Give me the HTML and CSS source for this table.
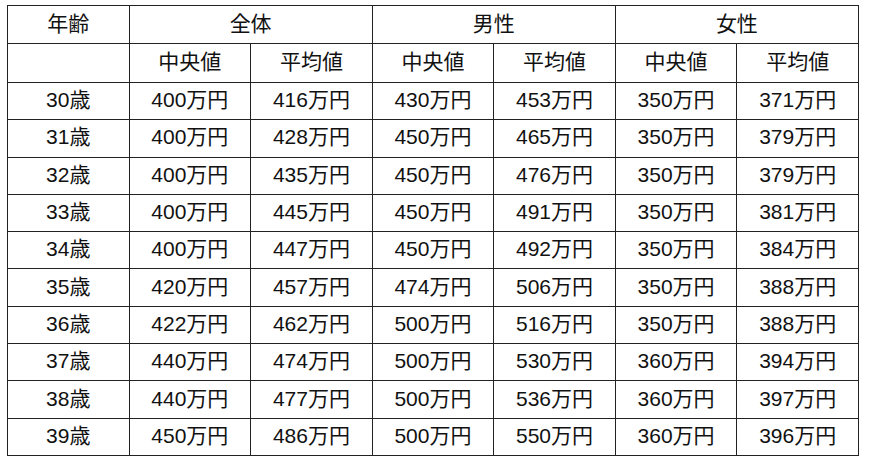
FILE: index.html
```html
<!DOCTYPE html>
<html lang="ja">
<head>
<meta charset="utf-8">
<link rel="stylesheet" href="styles.css">
</head>
<body>
<table class="salary">
  <colgroup>
    <col class="c"><col class="c"><col class="c"><col class="c"><col class="c"><col class="c"><col class="c">
  </colgroup>
  <thead>
    <tr class="h1">
      <th>年齢</th><th colspan="2">全体</th><th colspan="2">男性</th><th colspan="2">女性</th>
    </tr>
    <tr class="h2">
      <th></th><th>中央値</th><th>平均値</th><th>中央値</th><th>平均値</th><th>中央値</th><th>平均値</th>
    </tr>
  </thead>
  <tbody>
    <tr><td>30歳</td><td>400万円</td><td>416万円</td><td>430万円</td><td>453万円</td><td>350万円</td><td>371万円</td></tr>
    <tr><td>31歳</td><td>400万円</td><td>428万円</td><td>450万円</td><td>465万円</td><td>350万円</td><td>379万円</td></tr>
    <tr><td>32歳</td><td>400万円</td><td>435万円</td><td>450万円</td><td>476万円</td><td>350万円</td><td>379万円</td></tr>
    <tr><td>33歳</td><td>400万円</td><td>445万円</td><td>450万円</td><td>491万円</td><td>350万円</td><td>381万円</td></tr>
    <tr><td>34歳</td><td>400万円</td><td>447万円</td><td>450万円</td><td>492万円</td><td>350万円</td><td>384万円</td></tr>
    <tr><td>35歳</td><td>420万円</td><td>457万円</td><td>474万円</td><td>506万円</td><td>350万円</td><td>388万円</td></tr>
    <tr><td>36歳</td><td>422万円</td><td>462万円</td><td>500万円</td><td>516万円</td><td>350万円</td><td>388万円</td></tr>
    <tr><td>37歳</td><td>440万円</td><td>474万円</td><td>500万円</td><td>530万円</td><td>360万円</td><td>394万円</td></tr>
    <tr><td>38歳</td><td>440万円</td><td>477万円</td><td>500万円</td><td>536万円</td><td>360万円</td><td>397万円</td></tr>
    <tr><td>39歳</td><td>450万円</td><td>486万円</td><td>500万円</td><td>550万円</td><td>360万円</td><td>396万円</td></tr>
  </tbody>
</table>
</body>
</html>
```
FILE: styles.css
```css
html, body {
  margin: 0;
  padding: 0;
  background: #ffffff;
}
body {
  padding: 5px 0 0 7px;
  font-family: "Liberation Sans", "Noto Sans CJK JP", sans-serif;
  color: #111111;
}
.salary {
  border-collapse: collapse;
  table-layout: fixed;
  width: 851px;
  font-size: 21px;
}
.salary .c {
  width: 121.57px;
}
.salary th,
.salary td {
  border: 1.3px solid #222222;
  text-align: center;
  vertical-align: middle;
  padding: 0 0 2px 0;
  font-weight: normal;
  line-height: 24px;
}
.salary .h1 th {
  height: 38px;
  box-sizing: border-box;
}
.salary .h2 th {
  height: 39px;
  box-sizing: border-box;
}
.salary td {
  height: 37.3px;
  box-sizing: border-box;
}
```
